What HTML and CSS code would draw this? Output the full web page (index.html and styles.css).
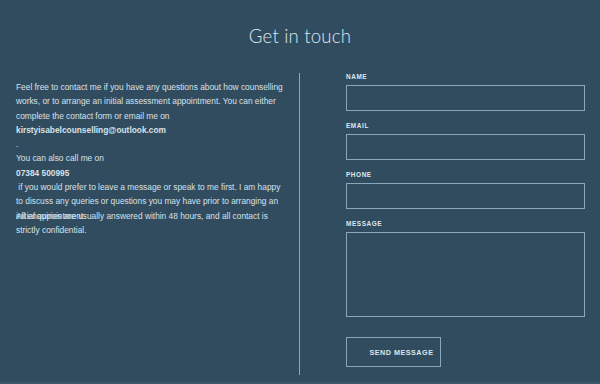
FILE: index.html
```html
<!DOCTYPE html>
<html lang="en">
<head>
  <meta charset="UTF-8">
  <title>Get in touch</title>
  <meta name="viewport" content="width=device-width, initial-scale=1.0">
  <link rel="stylesheet" href="styles.css">
</head>
<body>
  <div class="page">
    <h1 class="title">Get in touch</h1>

    <div class="columns">
      <div class="info">
        <p>Feel free to contact me if you have any questions about how counselling works, or to arrange an initial assessment appointment. You can either complete the contact form or email me on</p>
        <p class="strong">kirstyisabelcounselling@outlook.com</p>
        <p>.</p>
        <p>You can also call me on</p>
        <p class="strong">07384 500995</p>
        <p>&nbsp;if you would prefer to leave a message or speak to me first. I am happy to discuss any queries or questions you may have prior to arranging an initial appointment.</p>
        <p class="overlap">All enquiries are usually answered within 48 hours, and all contact is strictly confidential.</p>
      </div>

      <form class="contact" onsubmit="return false">
        <label for="name">NAME</label>
        <input type="text" id="name">
        <label for="email">EMAIL</label>
        <input type="email" id="email">
        <label for="phone">PHONE</label>
        <input type="tel" id="phone">
        <label for="message">MESSAGE</label>
        <textarea id="message"></textarea>
        <button type="submit">SEND MESSAGE</button>
      </form>
    </div>
  </div>
</body>
</html>
```

FILE: styles.css
```css
* {
  box-sizing: border-box;
}

body {
  margin: 0;
  background: #324c5f;
  font-family: 'Liberation Sans', Arial, sans-serif;
  color: #dde7ee;
}

.page {
  height: 384px;
  border-bottom: 2px solid #3d586b;
}

.title {
  margin: 0;
  padding-top: 24px;
  text-align: center;
  font-family: 'Lato', 'Liberation Sans', sans-serif;
  font-weight: 300;
  font-size: 18.6px;
  letter-spacing: 0.2px;
  color: #dce8f0;
  line-height: 24px;
}

.columns {
  display: grid;
  grid-template-columns: 299px 301px;
  margin-top: 25px;
}

.info {
  padding: 7px 16px 0 16px;
  font-size: 8.35px;
  line-height: 14.3px;
  color: #d6e1e9;
}

.info p {
  margin: 0;
}

.info .strong {
  font-weight: bold;
}

.info .overlap {
  margin-top: -14.3px;
}

.contact {
  border-left: 1px solid #8ba6b9;
  height: 302px;
  padding: 0 15px 0 46px;
  display: flex;
  flex-direction: column;
}

.contact label {
  font-size: 6.4px;
  font-weight: bold;
  letter-spacing: 0.6px;
  line-height: 8px;
  margin-bottom: 4px;
  color: #dde7ee;
}

.contact input,
.contact textarea {
  display: block;
  width: 100%;
  height: 26px;
  margin: 0 0 11px 0;
  background: transparent;
  border: 1px solid #8aa6ba;
  border-radius: 0;
  resize: none;
}

.contact textarea {
  height: 85px;
  margin-bottom: 20px;
}

.contact button {
  width: 95px;
  height: 30px;
  padding: 1px 0 0 16px;
  background: transparent;
  border: 1px solid #8aa6ba;
  color: #dde7ee;
  font-family: 'Liberation Sans', Arial, sans-serif;
  font-size: 7.2px;
  font-weight: bold;
  letter-spacing: 0.5px;
  cursor: pointer;
}
```
